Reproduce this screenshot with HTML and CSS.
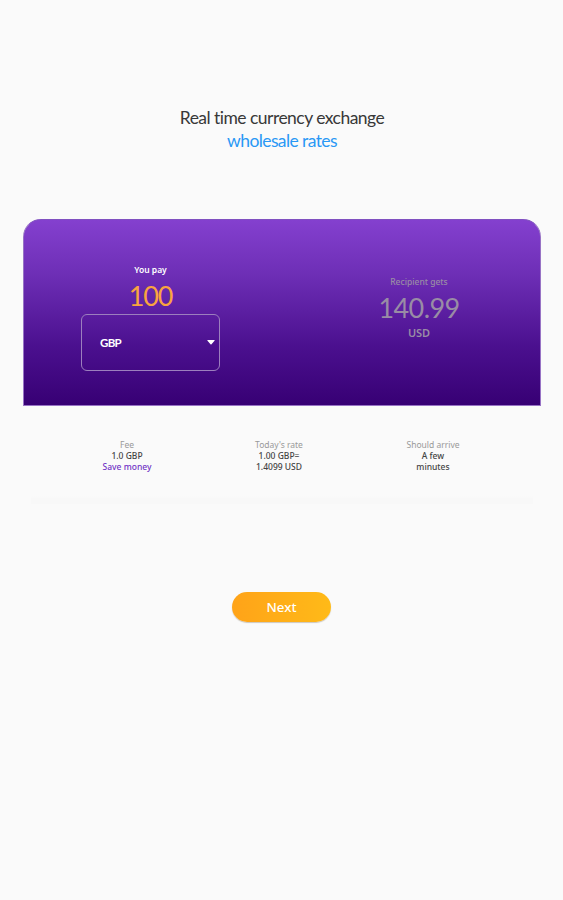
FILE: index.html
```html
<!DOCTYPE html>
<html lang="en">
<head>
<meta charset="utf-8">
<title>Currency exchange</title>
<link rel="stylesheet" href="styles.css">
</head>
<body>
<main class="page">
  <h1 class="title"><span class="title-main">Real time currency exchange</span><span class="title-accent">wholesale rates</span></h1>
  <section class="card">
    <div class="pay">
      <div class="label">You pay</div>
      <div class="amount"><span>100</span></div>
      <div class="select"><span>GBP</span>
        <svg class="caret" viewBox="0 0 8 5"><path d="M.8 0h6.4q.9 0 .3.8L4.5 4.3q-.5.6-1 0L.5.8Q-.1 0 .8 0z"/></svg>
      </div>
    </div>
    <div class="receive">
      <div class="label">Recipient gets</div>
      <div class="amount">140.99</div>
      <div class="currency">USD</div>
    </div>
  </section>
  <section class="details">
    <div class="detail"><div class="name">Fee</div><div>1.0 GBP</div><div class="save">Save money</div></div>
    <div class="detail rate"><div class="name">Today's rate</div><div>1.00 GBP=</div><div>1.4099 USD</div></div>
    <div class="detail arrival"><div class="name">Should arrive</div><div>A few</div><div>minutes</div></div>
  </section>
  <div class="divider"></div>
  <button class="next" type="button">Next</button>
</main>
</body>
</html>
```
FILE: styles.css
```css
* { box-sizing: border-box; }
body { margin: 0; background: #fafafa; font-family: "Noto Sans", sans-serif; }
.page { height: 900px; padding: 106px 22px 0 23px; display: flex; flex-direction: column; overflow: hidden; }
.title { margin: 0; font: 400 17.5px/23px Lato, sans-serif; color: #383838; display: flex; flex-direction: column; align-items: center; white-space: nowrap; height: 113px; }
.title-main { letter-spacing: -.53px; }
.title-accent { color: #2998f5; letter-spacing: -.6px; }
.card { height: 187px; border: 1px solid #9873c5; border-top-color: #8050c0; border-radius: 18px 18px 0 0; background: linear-gradient(#8440cf, #6d2eb5 30%, #4b108f 68%, #370074); display: flex; padding-left: 57px; text-align: center; white-space: nowrap; }
.pay { width: 139px; padding-top: 44px; color: #fff; }
.label { font-size: 8.5px; line-height: 12px; font-weight: 600; letter-spacing: 0; }
.amount { font: 400 27px/39px Lato, sans-serif; }
.pay .amount { color: #f9a43f; height: 38px; letter-spacing: -1.2px; }
.select { height: 57px; border: 1px solid #9c7fbe; border-radius: 6px; display: flex; align-items: center; justify-content: space-between; padding: 0 4px 0 18px; font: 700 11.5px/18px Lato, sans-serif; letter-spacing: -.7px; }
.caret { width: 8px; height: 5px; fill: #fff; }
.receive { width: 120px; margin-left: 139px; padding-top: 56px; color: #998ca5; }
.receive .label { font-weight: 500; font-size: 8.5px; }
.receive .amount { letter-spacing: -.6px; height: 37px; }
.currency { font-size: 11px; line-height: 15px; font-weight: 600; letter-spacing: -.1px; }
.details { display: flex; height: 90px; padding: 33px 0 0 54px; font-size: 8.5px; line-height: 11.2px; color: #444; font-weight: 500; text-align: center; white-space: nowrap; }
.detail { width: 100px; }
.rate { margin-left: 52px; }
.arrival { margin-left: 54px; }
.name { color: #999; font-weight: 400; }
.save { color: #7133c5; }
.divider { height: 8px; margin: 0 8px; background: linear-gradient(#fafafa, #f8f8f8 30%); }
.next { width: 99px; height: 30px; margin: 88px 0 0 209px; border: 0; border-radius: 15px; background: linear-gradient(90deg, #ffa318, #ffba18); color: #fff; font: 500 13.3px/30px "Noto Sans", sans-serif; padding: 0; box-shadow: 0 1px 1px #ccc6bc; }
```
